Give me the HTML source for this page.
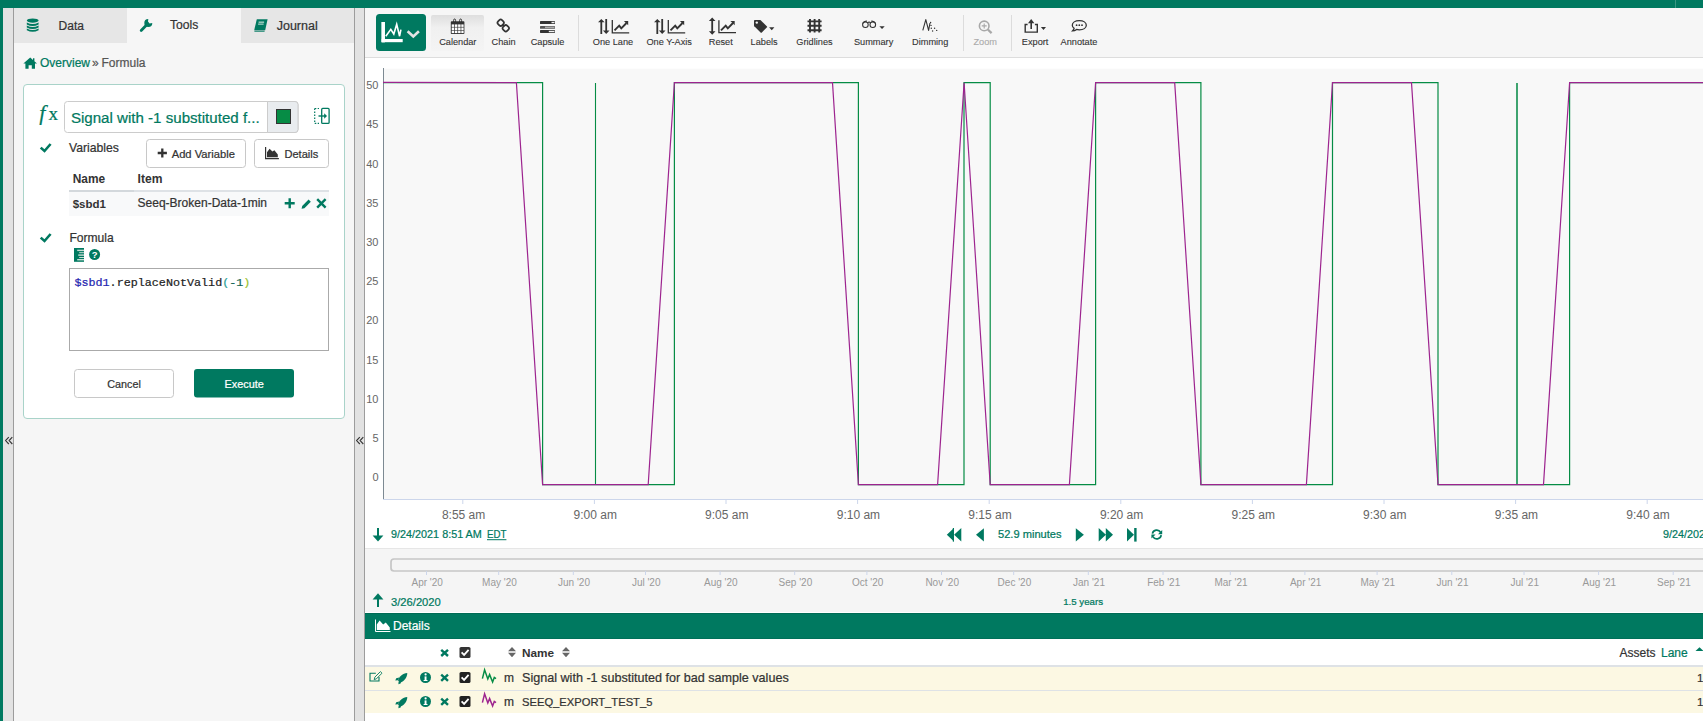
<!DOCTYPE html>
<html><head><meta charset="utf-8">
<style>
*{box-sizing:border-box;margin:0;padding:0}
html,body{width:1703px;height:721px;overflow:hidden;background:#fff;font-family:"Liberation Sans",sans-serif;color:#333}
.a{position:absolute}
.t{position:absolute;white-space:nowrap;line-height:1}
svg{position:absolute;overflow:visible}
</style></head><body>
<!-- top bar -->
<div class="a" style="left:0;top:0;width:1703px;height:8px;background:#007960"></div>
<div class="a" style="left:0;top:8px;width:3px;height:713px;background:#007960"></div>
<div class="a" style="left:1675px;top:0;width:1px;height:8px;background:#3a9682"></div>
<!-- left gutter strip -->
<div class="a" style="left:3px;top:8px;width:11px;height:713px;background:#e2e2e2;border-right:1px solid #9c9c9c"></div>
<!-- left panel -->
<div class="a" style="left:14px;top:8px;width:341px;height:713px;background:#f6f6f6;border-right:1px solid #9c9c9c"></div>
<!-- tabs -->
<div class="a" style="left:14px;top:8px;width:113px;height:35px;background:#e6e6e6"></div>
<div class="a" style="left:241px;top:8px;width:113px;height:35px;background:#e6e6e6"></div>
<!-- divider strip -->
<div class="a" style="left:355px;top:8px;width:10px;height:713px;background:#e2e2e2;border-right:1px solid #9c9c9c"></div>

<!-- right toolbar -->
<div class="a" style="left:365px;top:8px;width:1338px;height:50px;background:#f6f6f6;border-bottom:1px solid #ddd"></div>

<!-- chart plot bg -->
<div class="a" style="left:384px;top:68px;width:1319px;height:1px;background:#fdfdfd"></div>
<div class="a" style="left:384px;top:69px;width:1319px;height:430px;background:#f8f8f8"></div>

<!-- navigator -->
<div class="a" style="left:365px;top:548px;width:1338px;height:64px;background:#f5f5f5;border-top:1px solid #e6e6e6"></div>
<!-- details bar -->
<div class="a" style="left:365px;top:613px;width:1338px;height:26px;background:#007960;border-top:1px solid #006b55;border-bottom:1px solid #006f59"></div>
<!-- table header border -->
<div class="a" style="left:365px;top:665px;width:1338px;height:2px;background:#dee2e6"></div>
<div class="a" style="left:365px;top:667px;width:1338px;height:23px;background:#fcf8e3"></div>
<div class="a" style="left:365px;top:690px;width:1338px;height:1px;background:#dee2e6"></div>
<div class="a" style="left:365px;top:691px;width:1338px;height:22px;background:#fcf8e3"></div>

<!--LEFT-->
<svg class="a" style="left:0;top:0" width="360" height="721" viewBox="0 0 360 721">
<!-- tab icons -->
<g fill="#007960">
<ellipse cx="32.7" cy="20.6" rx="5.9" ry="2.1"/>
<path d="M26.8 22.4 Q32.7 25.4 38.6 22.4 V24.4 Q32.7 27.4 26.8 24.4 Z"/>
<path d="M26.8 25.4 Q32.7 28.4 38.6 25.4 V27.4 Q32.7 30.4 26.8 27.4 Z"/>
<path d="M26.8 28.4 Q32.7 31.4 38.6 28.4 V30.2 Q32.7 33.2 26.8 30.2 Z"/>
</g>
<path d="M141.2 30.4 L147 24.6" stroke="#007960" stroke-width="2.8" stroke-linecap="round"/>
<path d="M148.3 19 A4 4 0 1 0 152.3 23 L149.6 23.4 L148 21.6 Z" fill="#007960"/>
<g fill="#007960">
<path d="M256.8 19.2 H267.6 L265.2 30.2 H254.2 Z"/>
</g>
<path d="M254.4 31.2 H264.6" stroke="#007960" stroke-width="1"/>
<rect x="258.6" y="21.6" width="5.5" height="1.1" fill="#cfe6df"/>
<rect x="258.1" y="23.6" width="5.5" height="1" fill="#cfe6df"/>
<g font-family="Liberation Sans" fill="#333" stroke="#333" stroke-width="0.22">
<text x="58.6" y="29.8" font-size="12">Data</text>
<text x="170" y="29" font-size="12.1">Tools</text>
<text x="276.7" y="29.6" font-size="12.5">Journal</text>
</g>
<!-- breadcrumb -->
<path d="M30.2 57.6 L23.4 63.6 H25.4 V68.8 H28.6 V65.2 H31.8 V68.8 H35 V63.6 H37 L34.4 61.3 V58.2 H33 V60 Z" fill="#007960"/>
<g font-family="Liberation Sans" font-size="12">
<text x="40" y="67" fill="#007960" stroke="#007960" stroke-width="0.22">Overview</text>
<text x="92" y="67" fill="#555" stroke="#555" stroke-width="0.22">»</text><text x="101.5" y="67" fill="#555" stroke="#555" stroke-width="0.22">Formula</text>
</g>
<!-- collapse chevrons -->
<path d="M8.8 437.2 L5.6 440.6 L8.8 444 M12.3 437.2 L9.1 440.6 L12.3 444 M359.8 437.2 L356.6 440.6 L359.8 444 M363.3 437.2 L360.1 440.6 L363.3 444" stroke="#333" stroke-width="1.1" fill="none"/>
</svg>
<!-- card -->
<div class="a" style="left:23px;top:84px;width:322px;height:335px;background:#fff;border:1px solid #a9d3c9;border-radius:4px"></div>
<svg class="a" style="left:0;top:0" width="360" height="721" viewBox="0 0 360 721">
<text x="39.2" y="119.6" font-family="Liberation Serif" font-style="italic" font-size="22" fill="#007960" stroke="#007960" stroke-width="0.22">f</text>
<text x="48.6" y="119.6" font-family="Liberation Serif" font-size="19" fill="#007960" stroke="#007960" stroke-width="0.22">x</text>
<!-- input -->
<rect x="64.5" y="101.5" width="233.5" height="31" rx="3" fill="#fff" stroke="#ccc" stroke-width="1"/>
<path d="M267.5 101.5 H295 A3 3 0 0 1 298 104.5 V129.5 A3 3 0 0 1 295 132.5 H267.5 Z" fill="#e9ecef" stroke="#ccc" stroke-width="1"/>
<rect x="276.5" y="109.5" width="14" height="14" fill="#068C45" stroke="#333" stroke-width="1"/>
<text x="70.9" y="123" font-family="Liberation Sans" font-size="15.1" fill="#007960" stroke="#007960" stroke-width="0.22">Signal with -1 substituted f...</text>
<!-- side icon -->
<path d="M314.7 108.5 H319 M314.7 123.4 H319 M314.7 108.5 V123.4" stroke="#007960" stroke-width="1.2" stroke-dasharray="1.6 1.4" fill="none"/>
<rect x="321.7" y="108.4" width="7.4" height="15" rx="1" stroke="#007960" stroke-width="1.3" fill="none"/>
<path d="M318.5 116 H326" stroke="#007960" stroke-width="1.4"/>
<path d="M324.2 113.2 L327 116 L324.2 118.8 Z" fill="#007960"/>
<!-- checks -->
<path d="M40.7 147.6 L44.5 151 L50.6 144" stroke="#007960" stroke-width="2.6" fill="none"/>
<path d="M40.7 237.6 L44.5 241 L50.6 234" stroke="#007960" stroke-width="2.6" fill="none"/>
<g font-family="Liberation Sans" fill="#333" stroke="#333" stroke-width="0.22">
<text x="69" y="152" font-size="12.2">Variables</text>
<text x="69.4" y="241.8" font-size="12.1">Formula</text>
</g>
<!-- add variable btn -->
<rect x="146.5" y="139.5" width="99" height="28" rx="3" fill="#fff" stroke="#c8c8c8"/>
<path d="M162.3 148.4 V157.6 M157.7 153 H166.9" stroke="#333" stroke-width="2.3"/>
<text x="171.7" y="158" font-family="Liberation Sans" font-size="11.2" fill="#333" stroke="#333" stroke-width="0.22">Add Variable</text>
<!-- details btn -->
<rect x="254.5" y="139.5" width="74" height="28" rx="3" fill="#fff" stroke="#c8c8c8"/>
<path d="M265.6 147 V158.6 H278.9" stroke="#333" stroke-width="1.2" fill="none"/>
<path d="M267 157.2 V152.3 L269.6 148.8 L272.4 151.6 L274.4 150.2 L277.8 154.6 V157.2 Z" fill="#333"/>
<text x="284.4" y="158" font-family="Liberation Sans" font-size="11.1" fill="#333" stroke="#333" stroke-width="0.22">Details</text>
<!-- table -->
<g font-family="Liberation Sans" font-weight="bold" fill="#333">
<text x="72.7" y="183" font-size="11.9">Name</text>
<text x="137.6" y="183" font-size="12.1">Item</text>
</g>
<rect x="69" y="190" width="260" height="2" fill="#dee2e6"/>
<rect x="69" y="190" width="65" height="2" fill="#d3d8dc"/>
<rect x="69" y="192" width="260" height="24" fill="#f8f9fa"/>
<text x="72.7" y="207.6" font-family="Liberation Sans" font-weight="bold" font-size="11.5" fill="#333">$sbd1</text>
<text x="137.6" y="207.2" font-family="Liberation Sans" font-size="12" fill="#333" stroke="#333" stroke-width="0.22">Seeq-Broken-Data-1min</text>
<path d="M289.7 198.2 V208.2 M284.7 203.2 H294.7" stroke="#007960" stroke-width="2.4"/>
<path d="M301.6 208.8 L302.2 206 L308.6 199.6 L310.8 201.8 L304.4 208.2 Z" fill="#007960"/>
<path d="M317.2 199.2 L325.6 207.6 M325.6 199.2 L317.2 207.6" stroke="#007960" stroke-width="2.4"/>
<!-- formula tools -->
<rect x="74" y="248" width="10" height="13.8" fill="#007960"/>
<g fill="#c7ddd4"><rect x="77.2" y="249.7" width="6.8" height="1.4"/><rect x="79.2" y="252.2" width="4.8" height="1"/><rect x="78.2" y="254.4" width="5.8" height="1.4"/><rect x="79.2" y="257" width="4.8" height="1"/><rect x="77.2" y="259" width="6.8" height="1.4"/></g>
<circle cx="94.6" cy="254.5" r="5.5" fill="#007960"/>
<text x="94.6" y="258" font-family="Liberation Sans" font-weight="bold" font-size="9.5" fill="#fff" text-anchor="middle">?</text>
<!-- textarea -->
<rect x="69.5" y="268.5" width="259" height="82" fill="#fff" stroke="#aaa"/>
<text x="74.4" y="285.5" font-family="Liberation Mono" font-size="11.8" textLength="176" lengthAdjust="spacingAndGlyphs"><tspan fill="#2424b0" stroke="#2424b0" stroke-width="0.22">$sbd1</tspan><tspan fill="#222" stroke="#222" stroke-width="0.22">.replaceNotValid</tspan><tspan fill="#2aa198" stroke="#2aa198" stroke-width="0.22">(</tspan><tspan fill="#116655" stroke="#116655" stroke-width="0.22">-1</tspan><tspan fill="#9abf2a" stroke="#9abf2a" stroke-width="0.22">)</tspan></text>
<!-- buttons -->
<rect x="74.5" y="369.5" width="99" height="28" rx="3" fill="#fff" stroke="#c8c8c8"/>
<text x="124" y="388" font-family="Liberation Sans" font-size="10.8" fill="#333" text-anchor="middle" stroke="#333" stroke-width="0.22">Cancel</text>
<rect x="194" y="369" width="100" height="28.6" rx="3" fill="#007960"/>
<text x="244.2" y="388" font-family="Liberation Sans" font-size="10.9" fill="#fff" text-anchor="middle" stroke="#fff" stroke-width="0.22">Execute</text>
</svg>

<!--/LEFT-->
<!--TOOLBAR-->
<svg class="a" style="left:0;top:0" width="1703" height="60" viewBox="0 0 1703 60">
<defs>
<linearGradient id="calg" x1="0" y1="0" x2="0" y2="1"><stop offset="0" stop-color="#dedede"/><stop offset="0.35" stop-color="#f0f0f0"/><stop offset="1" stop-color="#f4f4f4"/></linearGradient>
</defs>
<!-- green view button -->
<rect x="376" y="14" width="50" height="37" rx="3.5" fill="#007960"/>
<path d="M383.2 22 V26.6 M383.2 22 V42.2" stroke="#fff" stroke-width="3.2" fill="none"/>
<rect x="381.6" y="22" width="3.3" height="20.2" fill="#fff"/>
<rect x="381.6" y="39" width="21.1" height="3.2" fill="#fff"/>
<path d="M385.8 36.2 L390.8 29.4 L393.8 34 L396.7 24.4 L399.6 36.2 L400.9 29.6" stroke="#fff" stroke-width="1.6" fill="none" stroke-linejoin="miter"/>
<path d="M407.6 31.3 L413.3 36.5 L418.9 31.3" stroke="#e4e4e4" stroke-width="2.6" fill="none"/>
<!-- calendar active -->
<rect x="431" y="15" width="53" height="36" rx="2" fill="url(#calg)"/>
<path d="M451.6 21.2 H463.6 Q464.4 21.2 464.4 22 V33.2 Q464.4 34 463.6 34 H451.6 Q450.8 34 450.8 33.2 V22 Q450.8 21.2 451.6 21.2 Z" fill="#333"/>
<g fill="#fff">
<rect x="451.7" y="24.4" width="2.5" height="2.5"/><rect x="454.9" y="24.4" width="2.5" height="2.5"/><rect x="458.1" y="24.4" width="2.5" height="2.5"/><rect x="461.3" y="24.4" width="2.3" height="2.5"/>
<rect x="451.7" y="27.5" width="2.5" height="2.5"/><rect x="454.9" y="27.5" width="2.5" height="2.5"/><rect x="458.1" y="27.5" width="2.5" height="2.5"/><rect x="461.3" y="27.5" width="2.3" height="2.5"/>
<rect x="451.7" y="30.6" width="2.5" height="2.5"/><rect x="454.9" y="30.6" width="2.5" height="2.5"/><rect x="458.1" y="30.6" width="2.5" height="2.5"/><rect x="461.3" y="30.6" width="2.3" height="2.5"/>
</g>
<path d="M453.6 22.6 V20.4 Q453.6 19 454.6 19 Q455.6 19 455.6 20.4 V22.6 M459.6 22.6 V20.4 Q459.6 19 460.6 19 Q461.6 19 461.6 20.4 V22.6" stroke="#333" stroke-width="1" fill="none"/>
<!-- chain -->
<g stroke="#333" stroke-width="1.7" fill="none">
<rect x="497.9" y="19.9" width="5.6" height="5.6" rx="1.9" transform="rotate(45 500.7 22.7)"/>
<rect x="503" y="25.5" width="5.6" height="5.6" rx="1.9" transform="rotate(45 505.8 28.3)"/>
<path d="M502.6 24.6 L503.9 26.4"/>
</g>
<!-- capsule -->
<rect x="540" y="21" width="15" height="3" rx="0.6" fill="#333"/><rect x="551.5" y="21.8" width="3" height="1.4" fill="#eee"/>
<rect x="540" y="25.9" width="15" height="2.9" rx="0.6" fill="#555"/><rect x="545" y="26.6" width="9.5" height="1.5" fill="#aaa"/>
<rect x="540" y="30.1" width="15" height="2.8" rx="0.6" fill="#333"/><rect x="548.8" y="30.8" width="5.7" height="1.4" fill="#f2f2f2"/>
<!-- separator -->
<rect x="578" y="15" width="1" height="36" fill="#dcdcdc"/>
<!-- one lane -->
<g id="lanes">
<path d="M601.3 21.5 V33.9 M606.2 18.9 V31.3" stroke="#333" stroke-width="1.8"/>
<path d="M598 22.3 L601.3 18.9 L604.6 22.3 Z M602.9 30.6 L606.2 34 L609.5 30.6 Z" fill="#333"/>
<path d="M612.3 20 V32.8 H629.2" stroke="#333" stroke-width="1.3" fill="none"/>
<path d="M614.5 30.3 L619.2 25.6 L621.3 28.4 L626.5 23" stroke="#333" stroke-width="1.9" fill="none"/>
<path d="M623.9 21.1 L628.2 21.1 L628.2 25.3 Z" fill="#333"/>
</g>
<use href="#lanes" x="56"/>
<!-- reset -->
<path d="M712.2 20 V32.3" stroke="#333" stroke-width="1.8"/>
<path d="M708.9 21 L712.2 17.5 L715.5 21 Z M708.9 31.2 L712.2 34.7 L715.5 31.2 Z" fill="#333"/>
<path d="M718.9 20.3 V32.6 H736" stroke="#333" stroke-width="1.3" fill="none"/>
<path d="M721 30.3 L725.7 25.6 L727.8 28.4 L733 23" stroke="#333" stroke-width="1.9" fill="none"/>
<path d="M730.4 21.1 L734.7 21.1 L734.7 25.3 Z" fill="#333"/>
<!-- labels tag -->
<path d="M754 20.6 Q754 19.9 754.7 19.9 L760.4 19.9 L767 26.5 Q767.3 26.9 767 27.3 L761.6 32.7 Q761.2 33 760.8 32.7 L754.3 26.2 Q754 25.9 754 25.5 Z" fill="#333"/>
<circle cx="756.8" cy="22.6" r="1.2" fill="#f6f6f6"/>
<path d="M769.1 27.3 H774.4 L771.75 30.2 Z" fill="#333"/>
<!-- gridlines -->
<g stroke="#333" stroke-width="1.9">
<path d="M810 18.9 V32.6 M814.6 18.9 V32.6 M819.2 18.9 V32.6 M807.5 21.4 H821.6 M807.5 25.8 H821.6 M807.5 30.2 H821.6"/>
</g>
<!-- summary glasses -->
<g stroke="#333" stroke-width="1.05" fill="none">
<circle cx="865.4" cy="24.7" r="2.8"/><circle cx="872.8" cy="24.7" r="2.8"/>
<path d="M862.6 23.5 Q864 20.8 867 21.2 M875.6 23.5 Q874.2 20.8 871.2 21.2 M867.5 22.6 Q869.1 21.7 870.7 22.6"/>
</g>
<path d="M879.4 26.2 H884.7 L882.05 29.1 Z" fill="#333"/>
<!-- dimming -->
<path d="M922.8 30.4 L925.8 19.6 L928.6 30.4 L930 23" stroke="#333" stroke-width="1.1" fill="none" stroke-linejoin="round"/>
<g fill="#333"><circle cx="930.6" cy="22.5" r="0.7"/><circle cx="931" cy="25.4" r="0.7"/><circle cx="931.3" cy="28.3" r="0.7"/><circle cx="932.6" cy="31" r="0.7"/><circle cx="934.6" cy="28.2" r="0.7"/><circle cx="936.7" cy="30.4" r="0.7"/></g>
<!-- separator -->
<rect x="963" y="15" width="1" height="36" fill="#dcdcdc"/>
<!-- zoom disabled -->
<g stroke="#a8a8a8" fill="none" stroke-width="1.6">
<circle cx="984.2" cy="25.9" r="4.8"/><path d="M987.8 29.5 L991.6 33.1" stroke-width="2.2"/>
<path d="M984.2 23.4 V28.4 M981.7 25.9 H986.7" stroke-width="1.1"/>
</g>
<rect x="1011" y="15" width="1" height="36" fill="#dcdcdc"/>
<!-- export -->
<path d="M1027.6 24.5 H1025.2 V32.1 H1037.3 V24.5 H1034.9" stroke="#333" stroke-width="1.4" fill="none"/>
<path d="M1031.2 22.5 V29" stroke="#333" stroke-width="1.6"/>
<path d="M1028 23.2 L1031.2 19 L1034.4 23.2 Z" fill="#333"/>
<path d="M1040.9 27.1 H1046 L1043.45 30 Z" fill="#333"/>
<!-- annotate -->
<path d="M1079.3 20.6 C1083.5 20.6 1086.3 22.6 1086.3 25.2 C1086.3 27.8 1083.5 29.8 1079.3 29.8 C1078.3 29.8 1077.4 29.7 1076.6 29.4 C1075.5 30.3 1074 30.9 1072.5 30.9 C1073.3 30.1 1073.9 29.2 1074.1 28.3 C1072.9 27.5 1072.3 26.4 1072.3 25.2 C1072.3 22.6 1075.1 20.6 1079.3 20.6 Z" stroke="#333" stroke-width="1.3" fill="none"/>
<g fill="#333"><circle cx="1076.6" cy="25.2" r="0.9"/><circle cx="1079.3" cy="25.2" r="0.9"/><circle cx="1082" cy="25.2" r="0.9"/></g>
<!-- labels -->
<g font-family="Liberation Sans" font-size="9.2" fill="#333" text-anchor="middle" stroke="#333" stroke-width="0.1">
<text x="457.8" y="44.6">Calendar</text>
<text x="503.6" y="44.6">Chain</text>
<text x="547.5" y="44.6">Capsule</text>
<text x="613" y="44.6">One Lane</text>
<text x="669.2" y="44.6">One Y-Axis</text>
<text x="720.8" y="44.6">Reset</text>
<text x="764.1" y="44.6">Labels</text>
<text x="814.5" y="44.6">Gridlines</text>
<text x="873.6" y="44.6">Summary</text>
<text x="930.2" y="44.6">Dimming</text>
<text x="985.2" y="44.6" fill="#aaa" stroke="#aaa" stroke-width="0.1">Zoom</text>
<text x="1035.1" y="44.6">Export</text>
<text x="1079" y="44.6">Annotate</text>
</g>
</svg>

<!--/TOOLBAR-->
<!--CHART-->
<svg class="a" style="left:0;top:0" width="1703" height="721" viewBox="0 0 1703 721">
<text x="378.5" y="89.1" text-anchor="end" font-size="11" fill="#666" font-family="Liberation Sans">50</text>
<text x="378.5" y="128.3" text-anchor="end" font-size="11" fill="#666" font-family="Liberation Sans">45</text>
<text x="378.5" y="167.5" text-anchor="end" font-size="11" fill="#666" font-family="Liberation Sans">40</text>
<text x="378.5" y="206.7" text-anchor="end" font-size="11" fill="#666" font-family="Liberation Sans">35</text>
<text x="378.5" y="245.9" text-anchor="end" font-size="11" fill="#666" font-family="Liberation Sans">30</text>
<text x="378.5" y="285.1" text-anchor="end" font-size="11" fill="#666" font-family="Liberation Sans">25</text>
<text x="378.5" y="324.3" text-anchor="end" font-size="11" fill="#666" font-family="Liberation Sans">20</text>
<text x="378.5" y="363.5" text-anchor="end" font-size="11" fill="#666" font-family="Liberation Sans">15</text>
<text x="378.5" y="402.7" text-anchor="end" font-size="11" fill="#666" font-family="Liberation Sans">10</text>
<text x="378.5" y="441.9" text-anchor="end" font-size="11" fill="#666" font-family="Liberation Sans">5</text>
<text x="378.5" y="481.1" text-anchor="end" font-size="11" fill="#666" font-family="Liberation Sans">0</text>
<line x1="383" y1="499.5" x2="1703" y2="499.5" stroke="#ccd6eb" stroke-width="1"/>
<line x1="383.5" y1="68" x2="383.5" y2="499" stroke="#7d8a93" stroke-width="1"/>
<line x1="462.8" y1="499" x2="462.8" y2="504" stroke="#ccd6eb" stroke-width="1"/>
<text x="463.6" y="518.8" text-anchor="middle" font-size="12" fill="#666" font-family="Liberation Sans">8:55 am</text>
<line x1="594.4" y1="499" x2="594.4" y2="504" stroke="#ccd6eb" stroke-width="1"/>
<text x="595.2" y="518.8" text-anchor="middle" font-size="12" fill="#666" font-family="Liberation Sans">9:00 am</text>
<line x1="726.0" y1="499" x2="726.0" y2="504" stroke="#ccd6eb" stroke-width="1"/>
<text x="726.8" y="518.8" text-anchor="middle" font-size="12" fill="#666" font-family="Liberation Sans">9:05 am</text>
<line x1="857.6" y1="499" x2="857.6" y2="504" stroke="#ccd6eb" stroke-width="1"/>
<text x="858.4" y="518.8" text-anchor="middle" font-size="12" fill="#666" font-family="Liberation Sans">9:10 am</text>
<line x1="989.2" y1="499" x2="989.2" y2="504" stroke="#ccd6eb" stroke-width="1"/>
<text x="990.0" y="518.8" text-anchor="middle" font-size="12" fill="#666" font-family="Liberation Sans">9:15 am</text>
<line x1="1120.8" y1="499" x2="1120.8" y2="504" stroke="#ccd6eb" stroke-width="1"/>
<text x="1121.6" y="518.8" text-anchor="middle" font-size="12" fill="#666" font-family="Liberation Sans">9:20 am</text>
<line x1="1252.4" y1="499" x2="1252.4" y2="504" stroke="#ccd6eb" stroke-width="1"/>
<text x="1253.2" y="518.8" text-anchor="middle" font-size="12" fill="#666" font-family="Liberation Sans">9:25 am</text>
<line x1="1384.0" y1="499" x2="1384.0" y2="504" stroke="#ccd6eb" stroke-width="1"/>
<text x="1384.8" y="518.8" text-anchor="middle" font-size="12" fill="#666" font-family="Liberation Sans">9:30 am</text>
<line x1="1515.6" y1="499" x2="1515.6" y2="504" stroke="#ccd6eb" stroke-width="1"/>
<text x="1516.4" y="518.8" text-anchor="middle" font-size="12" fill="#666" font-family="Liberation Sans">9:35 am</text>
<line x1="1647.2" y1="499" x2="1647.2" y2="504" stroke="#ccd6eb" stroke-width="1"/>
<text x="1648.0" y="518.8" text-anchor="middle" font-size="12" fill="#666" font-family="Liberation Sans">9:40 am</text>
<path d="M383.0 82.7 L542.6 82.7 L542.6 484.6 L674.4 484.6 L674.4 82.7 L858.4 82.7 L858.4 484.6 L964.0 484.6 L964.0 82.7 L990.2 82.7 L990.2 484.6 L1095.6 484.6 L1095.6 82.7 L1200.9 82.7 L1200.9 484.6 L1332.5 484.6 L1332.5 82.7 L1438.0 82.7 L1438.0 484.6 L1569.6 484.6 L1569.6 82.7 L1703.0 82.7" fill="none" stroke="#068C45" stroke-width="1.2"/>
<line x1="595.5" y1="83" x2="595.5" y2="484.6" stroke="#068C45" stroke-width="1.1"/>
<line x1="1517" y1="83" x2="1517" y2="484.6" stroke="#2a9a60" stroke-width="1.8"/>
<path d="M383.0 82.3 L516.4 82.7 L542.6 484.6 L648.2 484.6 L674.4 82.7 L832.5 82.7 L858.4 484.6 L937.6 484.6 L964.1 82.7 L990.2 484.6 L1069.4 484.6 L1095.6 82.7 L1174.7 82.7 L1200.9 484.6 L1306.4 484.6 L1332.5 82.7 L1411.5 82.7 L1438.0 484.6 L1543.5 484.6 L1569.6 82.7 L1703.0 82.7" fill="none" stroke="#9D248F" stroke-width="1.2"/>
<rect x="391" y="559" width="1330" height="12" rx="3" fill="none" stroke="#c6c6c6" stroke-width="1.7"/>
<line x1="426.5" y1="571" x2="426.5" y2="575" stroke="#ccd6eb" stroke-width="1"/>
<text x="427.2" y="586.3" text-anchor="middle" font-size="10" fill="#999" font-family="Liberation Sans">Apr '20</text>
<line x1="498.7" y1="571" x2="498.7" y2="575" stroke="#ccd6eb" stroke-width="1"/>
<text x="499.4" y="586.3" text-anchor="middle" font-size="10" fill="#999" font-family="Liberation Sans">May '20</text>
<line x1="573.3" y1="571" x2="573.3" y2="575" stroke="#ccd6eb" stroke-width="1"/>
<text x="574.0" y="586.3" text-anchor="middle" font-size="10" fill="#999" font-family="Liberation Sans">Jun '20</text>
<line x1="645.5" y1="571" x2="645.5" y2="575" stroke="#ccd6eb" stroke-width="1"/>
<text x="646.2" y="586.3" text-anchor="middle" font-size="10" fill="#999" font-family="Liberation Sans">Jul '20</text>
<line x1="720.1" y1="571" x2="720.1" y2="575" stroke="#ccd6eb" stroke-width="1"/>
<text x="720.8" y="586.3" text-anchor="middle" font-size="10" fill="#999" font-family="Liberation Sans">Aug '20</text>
<line x1="794.7" y1="571" x2="794.7" y2="575" stroke="#ccd6eb" stroke-width="1"/>
<text x="795.4" y="586.3" text-anchor="middle" font-size="10" fill="#999" font-family="Liberation Sans">Sep '20</text>
<line x1="866.9" y1="571" x2="866.9" y2="575" stroke="#ccd6eb" stroke-width="1"/>
<text x="867.6" y="586.3" text-anchor="middle" font-size="10" fill="#999" font-family="Liberation Sans">Oct '20</text>
<line x1="941.5" y1="571" x2="941.5" y2="575" stroke="#ccd6eb" stroke-width="1"/>
<text x="942.2" y="586.3" text-anchor="middle" font-size="10" fill="#999" font-family="Liberation Sans">Nov '20</text>
<line x1="1013.7" y1="571" x2="1013.7" y2="575" stroke="#ccd6eb" stroke-width="1"/>
<text x="1014.4" y="586.3" text-anchor="middle" font-size="10" fill="#999" font-family="Liberation Sans">Dec '20</text>
<line x1="1088.3" y1="571" x2="1088.3" y2="575" stroke="#ccd6eb" stroke-width="1"/>
<text x="1089.0" y="586.3" text-anchor="middle" font-size="10" fill="#999" font-family="Liberation Sans">Jan '21</text>
<line x1="1163.0" y1="571" x2="1163.0" y2="575" stroke="#ccd6eb" stroke-width="1"/>
<text x="1163.7" y="586.3" text-anchor="middle" font-size="10" fill="#999" font-family="Liberation Sans">Feb '21</text>
<line x1="1230.3" y1="571" x2="1230.3" y2="575" stroke="#ccd6eb" stroke-width="1"/>
<text x="1231.0" y="586.3" text-anchor="middle" font-size="10" fill="#999" font-family="Liberation Sans">Mar '21</text>
<line x1="1304.9" y1="571" x2="1304.9" y2="575" stroke="#ccd6eb" stroke-width="1"/>
<text x="1305.6" y="586.3" text-anchor="middle" font-size="10" fill="#999" font-family="Liberation Sans">Apr '21</text>
<line x1="1377.1" y1="571" x2="1377.1" y2="575" stroke="#ccd6eb" stroke-width="1"/>
<text x="1377.8" y="586.3" text-anchor="middle" font-size="10" fill="#999" font-family="Liberation Sans">May '21</text>
<line x1="1451.8" y1="571" x2="1451.8" y2="575" stroke="#ccd6eb" stroke-width="1"/>
<text x="1452.5" y="586.3" text-anchor="middle" font-size="10" fill="#999" font-family="Liberation Sans">Jun '21</text>
<line x1="1524.0" y1="571" x2="1524.0" y2="575" stroke="#ccd6eb" stroke-width="1"/>
<text x="1524.7" y="586.3" text-anchor="middle" font-size="10" fill="#999" font-family="Liberation Sans">Jul '21</text>
<line x1="1598.6" y1="571" x2="1598.6" y2="575" stroke="#ccd6eb" stroke-width="1"/>
<text x="1599.3" y="586.3" text-anchor="middle" font-size="10" fill="#999" font-family="Liberation Sans">Aug '21</text>
<line x1="1673.2" y1="571" x2="1673.2" y2="575" stroke="#ccd6eb" stroke-width="1"/>
<text x="1673.9" y="586.3" text-anchor="middle" font-size="10" fill="#999" font-family="Liberation Sans">Sep '21</text>
</svg>
<!--/CHART-->
<!--BOTTOM-->
<svg class="a" style="left:0;top:0" width="1703" height="721" viewBox="0 0 1703 721">
<!-- timebar -->
<path d="M378 528 V537" stroke="#007960" stroke-width="2"/>
<path d="M372.6 535.4 H383.4 L378 541.6 Z" fill="#007960"/>
<g font-family="Liberation Sans" fill="#007960" stroke="#007960" stroke-width="0.22">
<text x="391.1" y="537.9" font-size="10.8">9/24/2021 8:51 AM</text>
<text x="487" y="537.9" font-size="10.8" textLength="19.4" lengthAdjust="spacingAndGlyphs">EDT</text>
<text x="998" y="538" font-size="11.1">52.9 minutes</text>
<text x="1663" y="537.9" font-size="10.8">9/24/2021</text>
</g>
<rect x="487" y="539.2" width="19.4" height="1" fill="#007960"/>
<g fill="#007960">
<path d="M954 528 L946.8 534.8 L954 541.6 Z M961.3 528 L954.1 534.8 L961.3 541.6 Z"/>
<rect x="952.8" y="528" width="1.2" height="13.6"/>
<path d="M983.9 528.2 L976 534.8 L983.9 541.4 Z"/>
<path d="M1075.8 528.2 L1083.9 534.8 L1075.8 541.4 Z"/>
<path d="M1098.7 528 L1105.9 534.8 L1098.7 541.6 Z M1105.8 528 L1113 534.8 L1105.8 541.6 Z"/>
<path d="M1127 528 L1134 534.8 L1127 541.6 Z"/>
<rect x="1134.2" y="528" width="2.4" height="13.6"/>
</g>
<g stroke="#007960" stroke-width="1.7" fill="none">
<path d="M1152.4 533.6 A4.4 4.4 0 0 1 1160.6 532.4"/>
<path d="M1161.2 535.2 A4.4 4.4 0 0 1 1153 536.6"/>
</g>
<path d="M1162.2 530 V534.2 H1158 Z M1151.4 538.6 V534.6 H1155.6 Z" fill="#007960"/>
<!-- navigator -->
<path d="M378 598 V607" stroke="#007960" stroke-width="2"/>
<path d="M372.6 599.4 H383.4 L378 593.2 Z" fill="#007960"/>
<g font-family="Liberation Sans" fill="#007960" stroke="#007960" stroke-width="0.22">
<text x="391" y="606.3" font-size="11.2">3/26/2020</text>
<text x="1063.2" y="604.5" font-size="9.7">1.5 years</text>
</g>
<!-- details bar -->
<path d="M375.5 619.5 V631.5 H390.5" stroke="#fff" stroke-width="1" fill="none"/>
<path d="M376.8 630 V624.6 L379.6 620.6 L383.2 624.4 L385.8 622.6 L389.8 627.4 V630 Z" fill="#fff"/>
<text x="393" y="630.2" font-family="Liberation Sans" font-size="12" fill="#fff" stroke="#fff" stroke-width="0.22">Details</text>
<!-- header -->
<path d="M441.2 649.8 L448 656 M448 649.8 L441.2 656" stroke="#007960" stroke-width="2.4"/>
<rect x="459.5" y="647" width="11" height="11" rx="1.6" fill="#333"/>
<path d="M461.6 652.4 L464.1 654.9 L468.6 649.8" stroke="#fff" stroke-width="1.8" fill="none"/>
<path d="M508 651.3 L512 647 L516 651.3 Z M508 652.8 L512 657.2 L516 652.8 Z M562 651.3 L566 647 L570 651.3 Z M562 652.8 L566 657.2 L570 652.8 Z" fill="#666"/>
<g font-family="Liberation Sans" font-size="11.8">
<text x="522" y="656.8" font-weight="bold" fill="#333">Name</text>
<text x="1619.5" y="656.8" font-weight="normal" fill="#333" font-size="12" stroke="#333" stroke-width="0.22">Assets</text>
<text x="1661" y="656.8" fill="#007960" font-size="12" stroke="#007960" stroke-width="0.22">Lane</text>
</g>
<path d="M1695.5 651 L1699.5 647.2 L1703.5 651 Z" fill="#007960"/>
<!-- row icons -->
<g id="rowicons">
<path d="M398 680.6 C399 676.6 402.6 673.4 407.3 673 C407.2 677.6 404 681.4 400.4 682.4 Z" fill="#007960"/>
<path d="M399.2 677.6 L396.2 678.2 L395.3 680.4 L398.2 680.2 Z M401.4 680.2 L400.6 683.4 L398.4 684.2 L398.6 681.4 Z" fill="#007960"/>
<circle cx="425.5" cy="677.5" r="5.5" fill="#007960"/>
<rect x="424.6" y="676.4" width="1.9" height="4" fill="#fff"/><rect x="423.6" y="680" width="3.9" height="1" fill="#fff"/><circle cx="425.6" cy="674.4" r="1.1" fill="#fff"/>
<path d="M441.2 674.6 L448 680.8 M448 674.6 L441.2 680.8" stroke="#007960" stroke-width="2.4"/>
<rect x="459.5" y="672" width="11" height="11" rx="1.6" fill="#222"/>
<path d="M461.6 677.4 L464.1 679.9 L468.6 674.8" stroke="#fff" stroke-width="1.8" fill="none"/>
<text x="504" y="681.5" font-family="Liberation Sans" font-size="12" fill="#333" stroke="#333" stroke-width="0.22">m</text>
</g>
<use href="#rowicons" y="24"/>
<!-- edit icon -->
<path d="M375.8 673.2 H370 V681 H379 V677" stroke="#007960" stroke-width="1.1" fill="none"/>
<path d="M374.2 679.6 L374.8 677.2 L380.4 671.6 L382 673.2 L376.4 678.8 Z" stroke="#007960" stroke-width="0.9" fill="none"/>
<!-- signal icons -->
<path d="M482.4 678.6 L484.6 669.8 L487.8 679 L489.6 674.6 L492.6 682 L494.3 677.4 L496 678.6" stroke="#068C45" stroke-width="1.5" fill="none"/>
<path d="M482.4 702.6 L484.6 693.8 L487.8 703 L489.6 698.6 L492.6 706 L494.3 701.4 L496 702.6" stroke="#9D248F" stroke-width="1.5" fill="none"/>
<g font-family="Liberation Sans" fill="#333" stroke="#333" stroke-width="0.22">
<text x="522" y="681.5" font-size="12.6">Signal with -1 substituted for bad sample values</text>
<text x="522" y="705.5" font-size="11.2">SEEQ_EXPORT_TEST_5</text>
<text x="1697" y="681.5" font-size="11.5">1</text>
<text x="1697" y="705.5" font-size="11.5">1</text>
</g>
</svg>

<!--/BOTTOM-->
</body></html>
